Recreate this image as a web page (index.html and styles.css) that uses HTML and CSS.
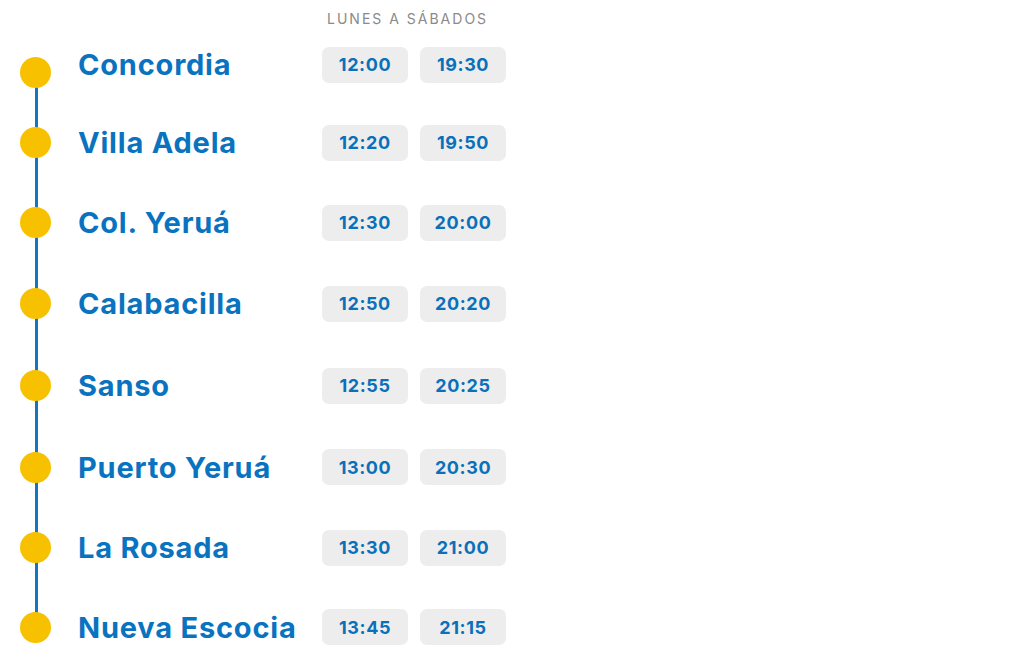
FILE: index.html
```html
<!DOCTYPE html>
<html lang="es">
<head>
<meta charset="utf-8">
<title>Horarios</title>
<link rel="stylesheet" href="styles.css">
</head>
<body>
<div class="schedule">
  <div class="schedule-head">LUNES A SÁBADOS</div>
  <ul class="stops">
    <li class="stop"><span class="dot dot-first"></span><span class="name">Concordia</span><span class="times"><span class="time">12:00</span><span class="time">19:30</span></span></li>
    <li class="stop"><span class="dot"></span><span class="name">Villa Adela</span><span class="times"><span class="time">12:20</span><span class="time">19:50</span></span></li>
    <li class="stop"><span class="dot"></span><span class="name">Col. Yeruá</span><span class="times"><span class="time">12:30</span><span class="time">20:00</span></span></li>
    <li class="stop"><span class="dot"></span><span class="name">Calabacilla</span><span class="times"><span class="time">12:50</span><span class="time">20:20</span></span></li>
    <li class="stop"><span class="dot"></span><span class="name">Sanso</span><span class="times"><span class="time">12:55</span><span class="time">20:25</span></span></li>
    <li class="stop"><span class="dot"></span><span class="name">Puerto Yeruá</span><span class="times"><span class="time">13:00</span><span class="time">20:30</span></span></li>
    <li class="stop"><span class="dot"></span><span class="name">La Rosada</span><span class="times"><span class="time">13:30</span><span class="time">21:00</span></span></li>
    <li class="stop"><span class="dot"></span><span class="name">Nueva Escocia</span><span class="times"><span class="time">13:45</span><span class="time">21:15</span></span></li>
  </ul>
</div>
</body>
</html>
```
FILE: styles.css
```css
html, body {
  margin: 0;
  padding: 0;
  background: #ffffff;
  overflow: hidden;
}

body {
  font-family: "Inter", "Liberation Sans", sans-serif;
}

.schedule {
  width: 1024px;
}

.schedule-head {
  padding: 12px 0 0 327px;
  height: 14px;
  line-height: 14px;
  font-size: 14px;
  font-weight: 400;
  letter-spacing: 2px;
  color: #8a8a8a;
}

.stops {
  position: relative;
  list-style: none;
  margin: 0;
  padding: 0;
  display: grid;
  grid-template-rows: 77px 79px 81px 81px 83px 80px 81px 78px;
}

.stops::before {
  content: "";
  position: absolute;
  left: 35px;
  top: 46px;
  width: 3px;
  height: 556px;
  background: #1675bd;
}

.stop {
  display: flex;
  align-items: center;
}

.dot {
  position: relative;
  flex: 0 0 31px;
  width: 31px;
  height: 31px;
  margin-left: 20px;
  border-radius: 50%;
  background: #f8c100;
}

.dot-first {
  margin-top: 16px;
}

.name {
  flex: 0 0 244px;
  margin-left: 27px;
  font-size: 29px;
  font-weight: 700;
  letter-spacing: 0.8px;
  color: #0a73bf;
  white-space: nowrap;
}

.times {
  display: flex;
  gap: 12px;
}

.time {
  width: 86px;
  height: 36px;
  border-radius: 7px;
  background: #ededed;
  display: flex;
  align-items: center;
  justify-content: center;
  font-size: 18px;
  font-weight: 700;
  letter-spacing: 0.6px;
  color: #0b70ba;
}
```
